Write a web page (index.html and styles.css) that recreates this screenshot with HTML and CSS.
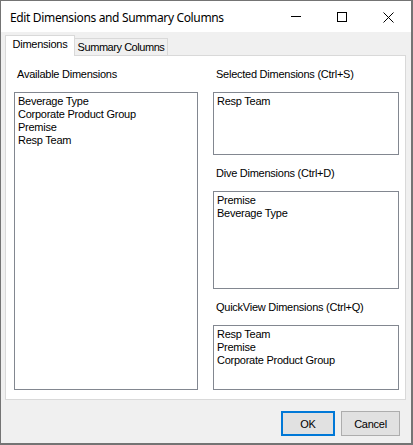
FILE: index.html
```html
<!DOCTYPE html>
<html>
<head>
<meta charset="utf-8">
<link rel="stylesheet" href="styles.css">
</head>
<body>
<div class="window">
  <div class="titlebar">
    <span class="title">Edit Dimensions and Summary Columns</span>
    <div class="caption-btn">
      <svg width="10" height="10" viewBox="0 0 10 10"><rect x="0" y="4" width="10" height="1" fill="#000"/></svg>
    </div>
    <div class="caption-btn">
      <svg width="10" height="10" viewBox="0 0 10 10"><rect x="0.5" y="0.5" width="9" height="9" fill="none" stroke="#000" stroke-width="1"/></svg>
    </div>
    <div class="caption-btn">
      <svg width="11" height="11" viewBox="0 0 11 11"><path d="M0.5 0.5 L10.5 10.5 M10.5 0.5 L0.5 10.5" stroke="#000" stroke-width="1" fill="none"/></svg>
    </div>
  </div>
  <div class="client">
    <div class="tabs">
      <div class="tab tab-active">Dimensions</div>
      <div class="tab">Summary Columns</div>
    </div>
    <div class="panel">
      <div class="col">
        <div class="label">Available Dimensions</div>
        <div class="list list-avail">
          <div>Beverage Type</div>
          <div>Corporate Product Group</div>
          <div>Premise</div>
          <div>Resp Team</div>
        </div>
      </div>
      <div class="col">
        <div class="label">Selected Dimensions (Ctrl+S)</div>
        <div class="list list-sel">
          <div>Resp Team</div>
        </div>
        <div class="label label-gap">Dive Dimensions (Ctrl+D)</div>
        <div class="list list-dive">
          <div>Premise</div>
          <div>Beverage Type</div>
        </div>
        <div class="label label-gap">QuickView Dimensions (Ctrl+Q)</div>
        <div class="list list-quick">
          <div>Resp Team</div>
          <div>Premise</div>
          <div>Corporate Product Group</div>
        </div>
      </div>
    </div>
    <div class="footer">
      <button class="btn btn-default">OK</button>
      <button class="btn btn-cancel">Cancel</button>
    </div>
  </div>
</div>
</body>
</html>
```

FILE: styles.css
```css
html, body {
  margin: 0;
  padding: 0;
  background: #ffffff;
}

.window {
  width: 413px;
  height: 445px;
  box-sizing: border-box;
  border-style: solid;
  border-color: #747474;
  border-width: 1px 2px 2px 1px;
  display: flex;
  flex-direction: column;
  font-family: "Liberation Sans", Arial, sans-serif;
  font-size: 11px;
  letter-spacing: -0.25px;
  color: #000;
}

.titlebar {
  height: 31px;
  background: #ffffff;
  display: flex;
  align-items: flex-start;
  flex: none;
}

.title {
  flex: 1;
  padding-left: 9px;
  padding-top: 8px;
  font-family: "Noto Sans", "Liberation Sans", sans-serif;
  font-size: 12px;
  letter-spacing: -0.35px;
  line-height: 17px;
  color: #000;
}

.caption-btn {
  width: 46px;
  height: 31px;
  display: flex;
  justify-content: center;
  padding-top: 11px;
  box-sizing: border-box;
}

.client {
  flex: 1;
  background: #f0f0f0;
  display: flex;
  flex-direction: column;
  padding-top: 3px;
}

.tabs {
  display: flex;
  align-items: flex-end;
  margin-left: 4px;
  height: 20px;
}

.tab {
  box-sizing: border-box;
  height: 17px;
  width: 93px;
  border: 1px solid #d9d9d9;
  border-bottom: none;
  border-left: none;
  background: #f0f0f0;
  text-align: center;
  line-height: 13px;
  padding-top: 2px;
  white-space: nowrap;
  letter-spacing: -0.45px;
}

.tab-active {
  position: relative;
  z-index: 1;
  width: 70px;
  height: 21px;
  margin-bottom: -1px;
  border-left: 1px solid #d9d9d9;
  background: #ffffff;
  padding-top: 2px;
  letter-spacing: -0.25px;
}

.panel {
  margin-left: 4px;
  width: 401px;
  height: 345px;
  box-sizing: border-box;
  border: 1px solid #d9d9d9;
  background: #ffffff;
  display: grid;
  grid-template-columns: 184px 186px;
  column-gap: 15px;
  padding: 12px 6px 0 8px;
  align-content: start;
}

.col {
  display: flex;
  flex-direction: column;
}

.label {
  line-height: 13px;
  height: 13px;
  margin-left: 3px;
  margin-bottom: 11px;
  white-space: nowrap;
}

.label-gap {
  margin-top: 12px;
}

.list {
  box-sizing: border-box;
  border: 1px solid #828790;
  background: #ffffff;
  padding: 2px 3px;
  line-height: 13px;
  white-space: nowrap;
}

.list-avail { height: 298px; }
.list-sel { height: 63px; }
.list-dive { height: 98px; }
.list-quick { height: 65px; }

.footer {
  display: flex;
  justify-content: flex-end;
  gap: 6px;
  padding-right: 11px;
  margin-top: 11px;
}

.btn {
  box-sizing: border-box;
  height: 25px;
  background: #e1e1e1;
  border: 1px solid #adadad;
  font-family: "Liberation Sans", Arial, sans-serif;
  font-size: 11px;
  letter-spacing: -0.25px;
  color: #000;
  padding: 0;
  margin: 0;
}

.btn-default {
  width: 54px;
  border: 2px solid #0078d7;
}

.btn-cancel {
  width: 59px;
}
```
